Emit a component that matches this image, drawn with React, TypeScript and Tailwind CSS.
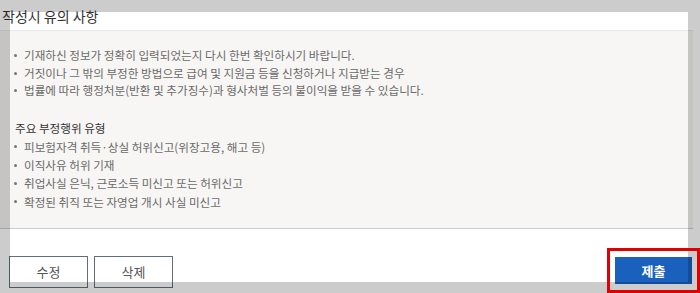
const font = { fontFamily: '"Noto Sans CJK KR", "Noto Sans", sans-serif' };

const notices = [
  "기재하신 정보가 정확히 입력되었는지 다시 한번 확인하시기 바랍니다.",
  "거짓이나 그 밖의 부정한 방법으로 급여 및 지원금 등을 신청하거나 지급받는 경우",
  "법률에 따라 행정처분(반환 및 추가징수)과 형사처벌 등의 불이익을 받을 수 있습니다.",
];

const fraudTypes = [
  "피보험자격 취득·상실 허위신고(위장고용, 해고 등)",
  "이직사유 허위 기재",
  "취업사실 은닉, 근로소득 미신고 또는 허위신고",
  "확정된 취직 또는 자영업 개시 사실 미신고",
];

function Bullet({ text, leading }: { text: string; leading: string }) {
  return (
    <li className={`flex items-center ${leading}`}>
      <span className="w-[12px] shrink-0 flex">
        <span className="w-[3px] h-[3px] rounded-full bg-[#777] ml-[2px]" />
      </span>
      <span>{text}</span>
    </li>
  );
}

export default function App() {
  return (
    <div
      className="relative w-[700px] h-[293px] overflow-hidden bg-white"
      style={font}
    >
      <div className="w-[693px]">
        {/* Title */}
        <h2 className="h-[30px] pt-[6px] pl-[2px] text-[14px] leading-[20px] text-[#333] font-normal">
          작성시 유의 사항
        </h2>

        {/* Notice box */}
        <div className="h-[199px] border-t border-t-[#e8e8e8] border-b border-b-[#cdcdcd] bg-[#f7f6f4] pt-[16px] pl-[12px] text-[11.6px] text-[#6a6a6a]">
          <ul>
            {notices.map((t) => (
              <Bullet key={t} text={t} leading="leading-[17.5px]" />
            ))}
          </ul>
          <p className="mt-[19px] pl-[3px] text-[11.6px] leading-[18px] text-[#333]">
            주요 부정행위 유형
          </p>
          <ul className="mt-[1px]">
            {fraudTypes.map((t) => (
              <Bullet key={t} text={t} leading="leading-[18.4px]" />
            ))}
          </ul>
        </div>

        {/* Actions */}
        <div className="flex items-start justify-between mt-[27px] pl-[9px] pr-[1px]">
          <div className="flex gap-[6px]">
            <button className="w-[79px] h-[32px] border border-[#607078] bg-white text-[13px] text-[#555]">
              수정
            </button>
            <button className="w-[79px] h-[32px] border border-[#607078] bg-white text-[13px] text-[#555]">
              삭제
            </button>
          </div>
          <button className="mt-[1px] w-[77px] h-[27px] bg-[#1a60bd] text-white text-[13px] font-bold">
            제출
          </button>
        </div>
      </div>

      {/* Dimmed overlay with highlighted cutout */}
      <div className="absolute left-[10px] top-[12px] w-[678px] h-[270px] shadow-[0_0_0_999px_rgba(0,0,0,0.2)] pointer-events-none" />

      {/* Red highlight on submit */}
      <div className="absolute left-[607px] top-[248px] w-[93px] h-[45px] border-[3px] border-[#e00000] pointer-events-none" />
    </div>
  );
}
